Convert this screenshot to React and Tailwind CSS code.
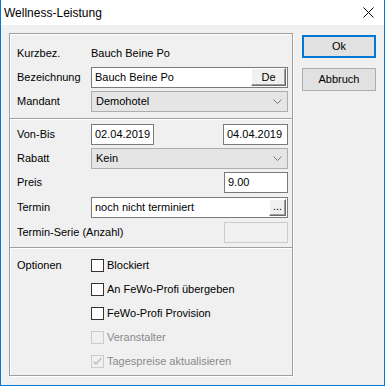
import React from "react";

const Raised = ({children, className = ""}) => (
    <div
        className={"flex items-center justify-center bg-[#f0f0f0] border-t border-l border-t-white border-l-white border-r border-b border-r-[#696969] border-b-[#696969] shadow-[inset_-1px_-1px_0_#a0a0a0] " + className}>
        {children}
    </div>
)

const Chevron = () => (
    <svg width="9" height="5" viewBox="0 0 9 5" className="mr-[5px]">
        <polyline points="0.5,0.5 4.5,4.5 8.5,0.5" fill="none" stroke="#7a7a7a" strokeWidth="1"/>
    </svg>
)

const Row = ({label, children, className = ""}) => (
    <div className={"flex items-center h-[21px] " + className}>
        <div className="w-[74px] shrink-0">{label}</div>
        <div className="flex-1 flex items-center h-full">{children}</div>
    </div>
)

const TextBox = ({value, className = ""}) => (
    <div className={"h-full flex items-center bg-white border border-[#7a7a7a] pl-[3px] " + className}>{value}</div>
)

const Combo = ({value}) => (
    <div className="h-full w-full flex items-center justify-between bg-[#e5e5e5] border border-[#adadad] pl-[4px]">
        <span>{value}</span>
        <Chevron/>
    </div>
)

const Check = ({label, disabled, checked}) => (
    <div className="flex items-center h-[21px]">
        <div
            className={"w-[13px] h-[13px] border flex items-center justify-center " + (disabled ? "border-[#cccccc] bg-[#f0f0f0]" : "border-[#333333] bg-white")}>
            {checked && (
                <svg width="11" height="11" viewBox="0 0 11 11">
                    <polyline points="1.5,5.5 4,8 9.5,2" fill="none" stroke="#bcbcbc" strokeWidth="1.3"/>
                </svg>
            )}
        </div>
        <span className={"ml-[3px] " + (disabled ? "text-[#8a8a8a]" : "text-black")}>{label}</span>
    </div>
)

const Divider = ({className = ""}) => (
    <div className={className}>
        <div className="h-px bg-[#a0a0a0]"/>
        <div className="h-px bg-white"/>
    </div>
)

export default function App() {
    return (
        <div className="w-[385px] h-[386px] flex flex-col border-x border-b border-[#0078d7] bg-[#f0f0f0] font-['Liberation_Sans',Arial,sans-serif] text-[11px] text-black">
            {/*TITLE*/}
            <div className="h-[25px] bg-white flex items-center justify-between shrink-0">
                <span className="text-[12px] pl-[3px]">Wellness-Leistung</span>
                <svg width="11" height="11" viewBox="0 0 11 11" className="mr-[10px]">
                    <line x1="0.5" y1="0.5" x2="10.5" y2="10.5" stroke="#000" strokeWidth="1"/>
                    <line x1="10.5" y1="0.5" x2="0.5" y2="10.5" stroke="#000" strokeWidth="1"/>
                </svg>
            </div>
            {/*BODY*/}
            <div className="flex flex-1">
                <div
                    className="ml-[8px] mt-[8px] w-[284px] h-[343px] border border-[#a0a0a0] shadow-[inset_1px_1px_0_#fff,1px_1px_0_#fff] flex flex-col">
                    <div className="pl-[7px] pr-[4px] pt-[9px] flex flex-col gap-[3px]">
                        <Row label="Kurzbez."><span>Bauch Beine Po</span></Row>
                        <Row label="Bezeichnung">
                            <div className="h-full w-full flex items-start justify-between bg-white border border-[#7a7a7a] pl-[3px]">
                                <span className="leading-[18px]">Bauch Beine Po</span>
                                <Raised className="w-[35px] h-[18px] mr-[1px]">De</Raised>
                            </div>
                        </Row>
                        <Row label="Mandant"><Combo value="Demohotel"/></Row>
                    </div>
                    <Divider className="mt-[6px]"/>
                    <div className="pl-[7px] pr-[4px] pt-[4px] flex flex-col">
                        <Row label="Von-Bis">
                            <TextBox value="02.04.2019" className="w-[63px]"/>
                            <TextBox value="04.04.2019" className="w-[65px] ml-auto"/>
                        </Row>
                        <Row label="Rabatt" className="mt-[3px]"><Combo value="Kein"/></Row>
                        <Row label="Preis" className="mt-[3px]">
                            <TextBox value="9.00" className="w-[64px] ml-auto"/>
                        </Row>
                        <Row label="Termin" className="mt-[4px]">
                            <div className="h-full w-full flex items-start justify-between bg-white border border-[#7a7a7a] pl-[3px]">
                                <span className="leading-[19px]">noch nicht terminiert</span>
                                <Raised className="w-[17px] h-[17px] mr-[1px] mt-[1px] pb-[3px]">...</Raised>
                            </div>
                        </Row>
                        <div className="flex items-center h-[21px] mt-[4px]">
                            <div className="flex-1">Termin-Serie (Anzahl)</div>
                            <div className="w-[64px] h-full border border-[#cccccc] bg-[#f0f0f0]"/>
                        </div>
                    </div>
                    <Divider className="mt-[4px]"/>
                    <div className="pl-[7px] pr-[4px] pt-[6px] flex">
                        <div className="w-[74px] h-[21px] flex items-center shrink-0">Optionen</div>
                        <div className="flex flex-col gap-[3px]">
                            <Check label="Blockiert"/>
                            <Check label="An FeWo-Profi übergeben"/>
                            <Check label="FeWo-Profi Provision"/>
                            <Check label="Veranstalter" disabled/>
                            <Check label="Tagespreise aktualisieren" disabled checked/>
                        </div>
                    </div>
                </div>
                {/*BUTTONS*/}
                <div className="ml-[9px] mt-[10px] flex flex-col">
                    <button className="w-[74px] h-[23px] bg-[#e1e1e1] border-2 border-[#0078d7] flex items-center justify-center">Ok</button>
                    <button className="w-[74px] h-[23px] mt-[10px] bg-[#e1e1e1] border border-[#adadad] flex items-center justify-center">Abbruch</button>
                </div>
            </div>
        </div>
    )
}
